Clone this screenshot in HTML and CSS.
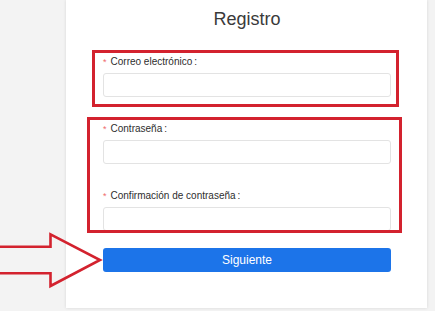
FILE: index.html
```html
<!DOCTYPE html>
<html lang="es">
<head>
<meta charset="utf-8">
<title>Registro</title>
<link rel="stylesheet" href="styles.css">
</head>
<body>
<div class="card">
  <h1 class="title">Registro</h1>
  <form class="form">
    <div class="item">
      <label class="label"><span class="req">*</span>Correo electrónico<span class="colon">:</span></label>
      <input class="input" type="text">
    </div>
    <div class="item">
      <label class="label"><span class="req">*</span>Contraseña<span class="colon">:</span></label>
      <input class="input" type="password">
    </div>
    <div class="item item-last">
      <label class="label"><span class="req">*</span>Confirmación de contraseña<span class="colon">:</span></label>
      <input class="input" type="password">
    </div>
    <button class="btn" type="button">Siguiente</button>
  </form>
</div>
<div class="mark mark-email"></div>
<div class="mark mark-pass"></div>
<svg class="arrow" width="110" height="70" viewBox="0 0 110 70">
  <polygon points="-3,16.7 50.5,16.7 50.5,4.3 100,30 50.5,56 50.5,43.3 -3,43.3" fill="none" stroke="#d3222e" stroke-width="2.6" stroke-linejoin="miter"/>
</svg>
</body>
</html>
```

FILE: styles.css
```css
* { box-sizing: border-box; }
html, body { margin: 0; padding: 0; }
body {
  background: #f3f3f3;
  font-family: "Liberation Sans", Arial, sans-serif;
  color: #333;
  width: 435px;
  height: 311px;
  overflow: hidden;
  position: relative;
}
.card {
  margin-left: 66px;
  width: 361px;
  height: 308px;
  background: #fff;
  box-shadow: 0 0 3px rgba(0,0,0,0.12);
  padding: 9px 36px 0 37px;
}
.title {
  margin: 0;
  font-size: 18px;
  line-height: 20px;
  font-weight: normal;
  text-align: center;
  color: #3a3a3a;
}
.form {
  margin-top: 24px;
  display: flex;
  flex-direction: column;
}
.item {
  display: flex;
  flex-direction: column;
  gap: 4px;
  margin-bottom: 23px;
}
.item-last { margin-bottom: 17px; }
.label {
  font-size: 10px;
  line-height: 14px;
  padding-top: 2px;
  color: #2e2e2e;
}
.req {
  color: #f06b6b;
  margin-right: 4px;
  font-size: 9px;
}
.colon { margin-left: 2px; }
.input {
  height: 24px;
  width: 100%;
  border: 1px solid #e3e3e3;
  border-radius: 3px;
  background: #fff;
  outline: none;
}
.btn {
  height: 24px;
  width: 100%;
  border: none;
  border-radius: 3px;
  background: #1c74e9;
  color: #fff;
  font-family: "Liberation Sans", Arial, sans-serif;
  font-size: 12px;
  line-height: 24px;
  padding: 0;
}
.mark {
  position: absolute;
  border: 3px solid #d3222e;
}
.mark-email { left: 92px; top: 50px; width: 307px; height: 57px; }
.mark-pass { left: 87px; top: 117px; width: 315px; height: 116px; }
.arrow { position: absolute; left: 0; top: 230px; }
```
